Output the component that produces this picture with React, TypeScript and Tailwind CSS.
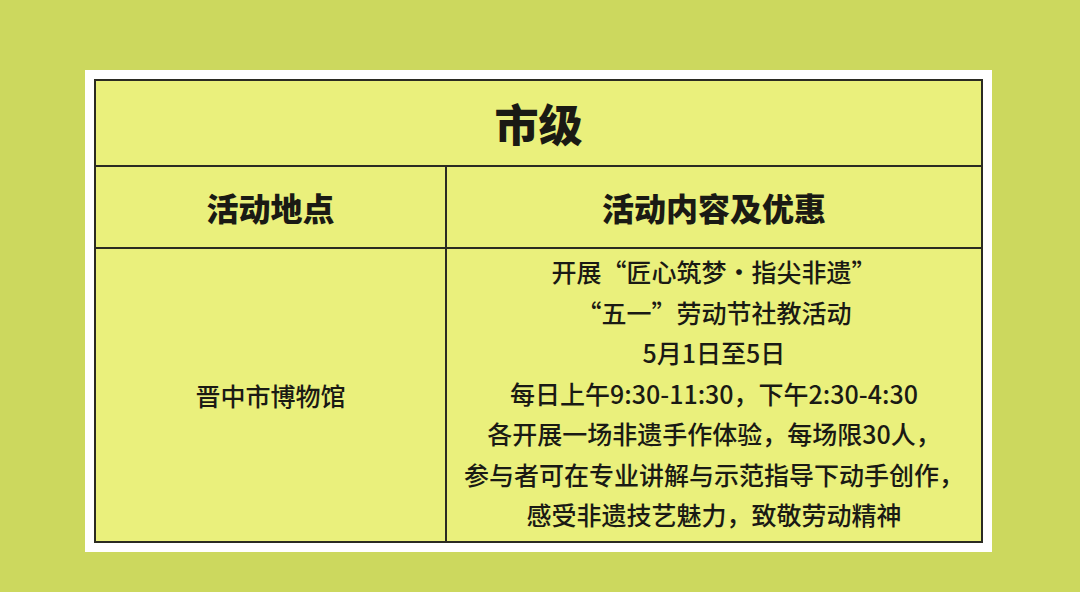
const lines = [
  "开展“匠心筑梦·指尖非遗”",
  "“五一”劳动节社教活动",
  "5月1日至5日",
  "每日上午9:30-11:30，下午2:30-4:30",
  "各开展一场非遗手作体验，每场限30人，",
  "参与者可在专业讲解与示范指导下动手创作，",
  "感受非遗技艺魅力，致敬劳动精神",
];

export default function App() {
  return (
    <div
      className="w-[1080px] h-[592px] bg-[#ccd85e] pt-[70px] pl-[85px]"
      style={{ fontFamily: '"Noto Sans CJK SC", "Noto Sans", sans-serif' }}
    >
      <div className="w-[907px] h-[482px] bg-white p-[9px]">
        <div className="w-full h-full flex flex-col border-2 border-[#2b2b22] bg-[#eaf07c] text-[#1a1a14]">
          <div className="h-[86px] flex items-center justify-center border-b-2 border-[#2b2b22]">
            <span className="text-[44px] font-black leading-none">市级</span>
          </div>
          <div className="h-[82px] grid grid-cols-[351px_1fr] border-b-2 border-[#2b2b22]">
            <div className="flex items-center justify-center border-r-2 border-[#2b2b22]">
              <span className="text-[32px] font-black leading-none">活动地点</span>
            </div>
            <div className="flex items-center justify-center">
              <span className="text-[32px] font-black leading-none">活动内容及优惠</span>
            </div>
          </div>
          <div className="flex-1 grid grid-cols-[351px_1fr]">
            <div className="flex items-center justify-center border-r-2 border-[#2b2b22]">
              <span className="text-[25px] font-medium leading-none">晋中市博物馆</span>
            </div>
            <div className="flex flex-col items-center justify-center pb-[4px]">
              {lines.map((l) => (
                <div key={l} className="text-[25px] font-medium leading-[40.5px] text-center whitespace-nowrap">
                  {l}
                </div>
              ))}
            </div>
          </div>
        </div>
      </div>
    </div>
  );
}
